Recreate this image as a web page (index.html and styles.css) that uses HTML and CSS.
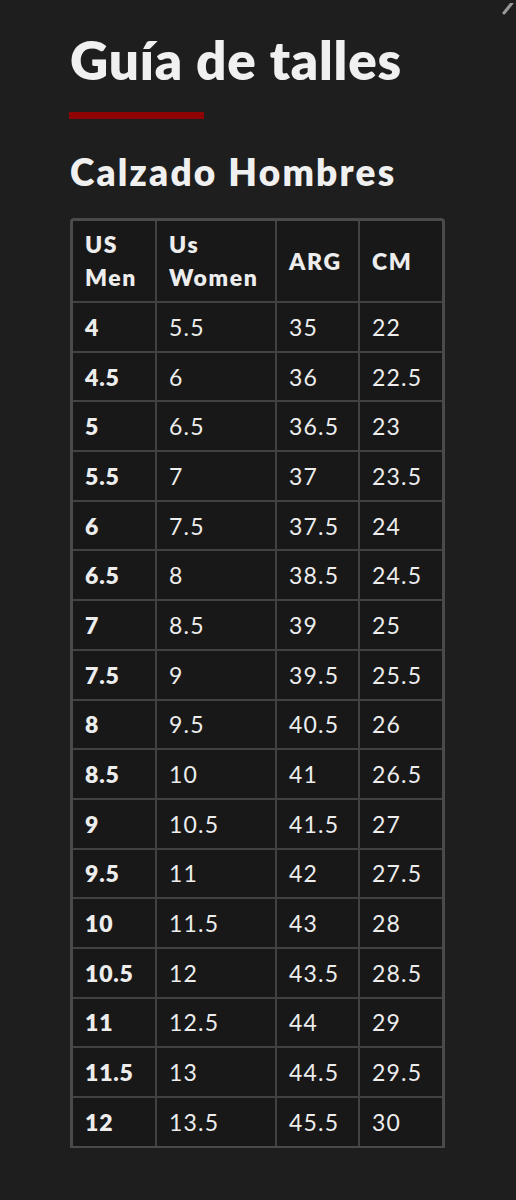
FILE: index.html
```html
<!DOCTYPE html>
<html lang="es">
<head>
<meta charset="utf-8">
<title>Guía de talles</title>
<link rel="stylesheet" href="styles.css">
</head>
<body>
<div class="close-mark"><svg width="16" height="12" viewBox="0 0 16 12"><line x1="6" y1="10" x2="14" y2="0" stroke="#9a9a9a" stroke-width="3" stroke-linecap="round"/></svg></div>
<main class="page">
  <h1 class="title">Guía de talles</h1>
  <div class="accent"></div>
  <h2 class="subtitle">Calzado Hombres</h2>
  <div class="table-wrap">
    <table class="sizes">
      <colgroup><col class="c1"><col class="c2"><col class="c3"><col class="c4"></colgroup>
      <thead>
        <tr><th>US<br>Men</th><th>Us<br>Women</th><th>ARG</th><th>CM</th></tr>
      </thead>
      <tbody>
        <tr><td>4</td><td>5.5</td><td>35</td><td>22</td></tr>
        <tr><td>4.5</td><td>6</td><td>36</td><td>22.5</td></tr>
        <tr><td>5</td><td>6.5</td><td>36.5</td><td>23</td></tr>
        <tr><td>5.5</td><td>7</td><td>37</td><td>23.5</td></tr>
        <tr><td>6</td><td>7.5</td><td>37.5</td><td>24</td></tr>
        <tr><td>6.5</td><td>8</td><td>38.5</td><td>24.5</td></tr>
        <tr><td>7</td><td>8.5</td><td>39</td><td>25</td></tr>
        <tr><td>7.5</td><td>9</td><td>39.5</td><td>25.5</td></tr>
        <tr><td>8</td><td>9.5</td><td>40.5</td><td>26</td></tr>
        <tr><td>8.5</td><td>10</td><td>41</td><td>26.5</td></tr>
        <tr><td>9</td><td>10.5</td><td>41.5</td><td>27</td></tr>
        <tr><td>9.5</td><td>11</td><td>42</td><td>27.5</td></tr>
        <tr><td>10</td><td>11.5</td><td>43</td><td>28</td></tr>
        <tr><td>10.5</td><td>12</td><td>43.5</td><td>28.5</td></tr>
        <tr><td>11</td><td>12.5</td><td>44</td><td>29</td></tr>
        <tr><td>11.5</td><td>13</td><td>44.5</td><td>29.5</td></tr>
        <tr><td>12</td><td>13.5</td><td>45.5</td><td>30</td></tr>
      </tbody>
    </table>
  </div>
</main>
</body>
</html>
```
FILE: styles.css
```css
html, body {
  margin: 0;
  padding: 0;
  background: #1e1e1e;
  color: #f0f0f0;
  font-family: "Lato", "Open Sans", sans-serif;
}
.close-mark {
  position: absolute;
  top: -1px;
  right: 2px;
}
.page {
  padding: 28px 0 0 70px;
  width: 375px;
}
.title {
  margin: 0;
  font-size: 53px;
  font-weight: 800;
  line-height: 64px;
  letter-spacing: 0.8px;
}
.accent {
  width: 135px;
  height: 7px;
  background: #8e0404;
  margin: 20px 0 0 -1px;
}
.subtitle {
  margin: 31px 0 0;
  font-size: 37px;
  font-weight: 800;
  line-height: 44px;
  letter-spacing: 2.2px;
}
.table-wrap {
  margin-top: 24px;
  border: 3px solid #4a4a4a;
  border-bottom-width: 2px;
  border-radius: 4px 4px 0 0;
  background: #181818;
  width: 369px;
}
.sizes {
  width: 100%;
  border-collapse: collapse;
  table-layout: fixed;
}
.c1 { width: 83px; }
.c2 { width: 120px; }
.c3 { width: 83px; }
.sizes th, .sizes td {
  border: 2px solid #424242;
  padding: 0 0 0 12px;
  text-align: left;
  color: #ededed;
}
.sizes tr > :first-child { border-left: none; }
.sizes tr > :last-child { border-right: none; }
.sizes thead tr > * { border-top: none; }
.sizes tbody tr:last-child > * { border-bottom: none; }
.sizes th {
  font-size: 23px;
  font-weight: 800;
  line-height: 33px;
  height: 80px;
  letter-spacing: 1.6px;
}
.sizes td {
  font-size: 23px;
  font-weight: 400;
  height: 47.7px;
  line-height: 26px;
  letter-spacing: 1.2px;
}
.sizes td:first-child { font-weight: 800; letter-spacing: 0.8px; }
```
